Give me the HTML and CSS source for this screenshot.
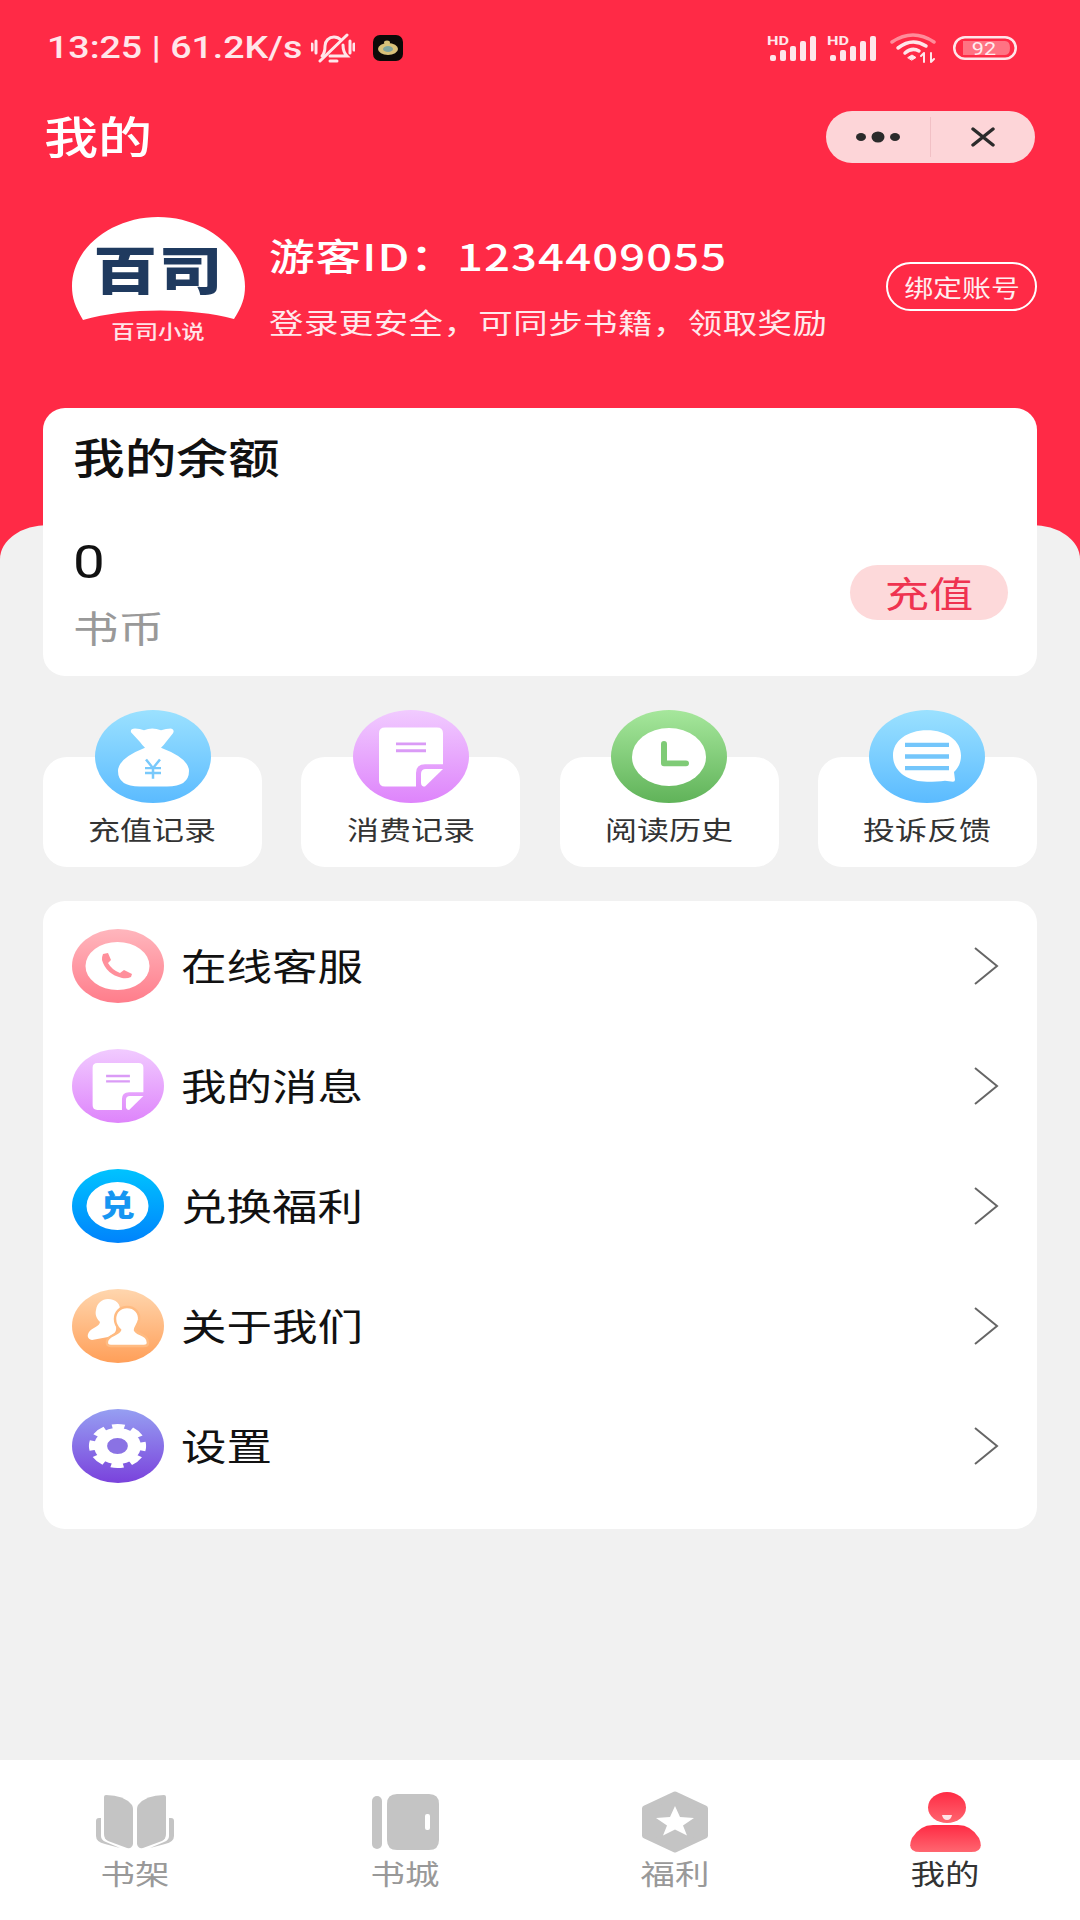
FILE: index.html
```html
<!DOCTYPE html>
<html lang="zh-CN">
<head>
<meta charset="utf-8">
<title>我的</title>
<link rel="stylesheet" href="styles.css">
</head>
<body>
<div class="screen">
  <div class="status">
    <span class="sx status-text">13:25 | 61.2K/s</span>
    <svg class="bell" width="44" height="30" viewBox="0 0 44 30" fill="none" stroke="#ffe6ea" stroke-width="3" stroke-linecap="round">
      <path d="M1 11v6M5 8v12M39 8v12M43 11v6"/>
      <path d="M11 23c3-3 3-6 3-10 0-5 4-9 9-9 3 0 5 1 7 3M32 12c0 5 1 8 4 11H19"/>
      <path d="M9 28L36 2"/>
      <path d="M19 28h7"/>
    </svg>
    <svg class="appicon" width="30" height="26" viewBox="0 0 30 26">
      <rect width="30" height="26" rx="7" fill="#0c0a08"/>
      <ellipse cx="15" cy="14" rx="10" ry="6" fill="#d8c27a"/>
      <ellipse cx="15" cy="14" rx="5" ry="3" fill="#7fa6a0"/>
      <ellipse cx="14" cy="7.500" rx="3" ry="2" fill="#d8c27a"/>
    </svg>
    <span class="status-gap"></span>
    <svg class="signal" width="50" height="36" viewBox="0 0 50 36">
      <text class="hd" transform="translate(0 14.500) scale(1.250 1)">HD</text>
      <rect x="3" y="25" width="6" height="6" rx="2" fill="#ffe6ea"/>
      <rect x="13" y="20" width="6" height="11" rx="2" fill="#ffe6ea"/>
      <rect x="23" y="16" width="6" height="15" rx="2" fill="#ffe6ea"/>
      <rect x="33" y="11" width="6" height="20" rx="2" fill="#ffe6ea"/>
      <rect x="43" y="6" width="6" height="25" rx="2" fill="#ffe6ea"/>
    </svg>
    <svg class="signal second" width="50" height="36" viewBox="0 0 50 36">
      <text class="hd" transform="translate(0 14.500) scale(1.250 1)">HD</text>
      <rect x="3" y="25" width="6" height="6" rx="2" fill="#ffe6ea"/>
      <rect x="13" y="20" width="6" height="11" rx="2" fill="#ffe6ea"/>
      <rect x="23" y="16" width="6" height="15" rx="2" fill="#ffe6ea"/>
      <rect x="33" y="11" width="6" height="20" rx="2" fill="#ffe6ea"/>
      <rect x="43" y="6" width="6" height="25" rx="2" fill="#ffe6ea"/>
    </svg>
    <svg class="wifi" width="46" height="30" viewBox="0 0 46 30" fill="none" stroke-linecap="round">
      <path d="M2 9Q23 -5 44 9" stroke="#ff8c9a" stroke-width="3.500"/>
      <path d="M8 15Q22 4 36 13" stroke="#ffe6ea" stroke-width="3.500"/>
      <path d="M15 20Q22 14 29 18" stroke="#ffe6ea" stroke-width="3.500"/>
      <path d="M18 24.500L22 22L26 24.500L22 27Z" fill="#ffe6ea" stroke="#ffe6ea" stroke-width="1"/>
      <path d="M34 29V20M34 20l-3 3M41 20v9M41 29l3-3" stroke="#ffe6ea" stroke-width="2"/>
    </svg>
    <svg class="battery" width="64" height="24" viewBox="0 0 64 24">
      <rect x="1.250" y="1.250" width="61.500" height="21.500" rx="10.700" fill="none" stroke="#ffe6ea" stroke-width="2.500"/>
      <path d="M10 5H52Q57 5 57 12Q57 19 52 19H10Z" fill="#ff7383"/>
      <text class="batt-num" transform="translate(31 18.500) scale(1.200 1)">92</text>
    </svg>
  </div>

  <div class="titlebar">
    <h1 class="sx page-title">我的</h1>
    <div class="capsule">
      <div class="cap-seg">
        <svg width="50" height="16" viewBox="0 0 50 16" fill="#2b2b2b"><ellipse cx="8" cy="8" rx="5" ry="4"/><ellipse cx="25" cy="8" rx="6.500" ry="5.500"/><ellipse cx="42" cy="8" rx="5" ry="4"/></svg>
      </div>
      <span class="cap-divider"></span>
      <div class="cap-seg">
        <svg width="24" height="20" viewBox="0 0 24 20" fill="none" stroke="#2b2b2b" stroke-width="3.400" stroke-linecap="round"><path d="M2 2L22 18M22 2L2 18"/></svg>
      </div>
    </div>
  </div>

  <div class="profile">
    <div class="avatar">
      <svg class="dome" width="173" height="104" viewBox="0 0 173 108" preserveAspectRatio="none"><path d="M11 107C3 93 0 84 0 72C0 32 40 0 86 0C132 0 173 32 173 72C173 84 170 93 162 106C120 94 54 94 11 107Z" fill="#fff"/></svg>
      <span class="sc logo-mark">百司</span>
      <span class="sc logo-name">百司小说</span>
    </div>
    <div class="info">
      <div class="sx name">游客ID：1234409055</div>
      <div class="sx hint">登录更安全，可同步书籍，领取奖励</div>
    </div>
    <div class="bind"><span class="sc bind-text">绑定账号</span></div>
  </div>

  <div class="sheet">
    <section class="balance">
      <h2 class="sx balance-title">我的余额</h2>
      <div class="balance-row">
        <div class="balance-col">
          <div class="sx amount">0</div>
          <div class="sx unit">书币</div>
        </div>
        <div class="recharge"><span class="sc recharge-text">充值</span></div>
      </div>
    </section>

    <div class="quick">
      <div class="qcard">
        <svg class="qicon" width="116" height="93" viewBox="0 0 116 96" preserveAspectRatio="none">
          <defs><linearGradient id="qg1" x1="0" y1="0" x2="0" y2="1"><stop offset="0" stop-color="#9be1ff"/><stop offset="1" stop-color="#5bbbff"/></linearGradient></defs>
          <ellipse cx="58" cy="48" rx="58" ry="48" fill="url(#qg1)"/>
          <path d="M36 23Q35 19 40 19Q45 19 49 21Q57 17 66 21Q71 19 76 19Q80 20 78 24L71 33Q69 36 66 39Q94 50 94 63Q94 79 72 79H45Q23 79 23 63Q23 50 50 39Q47 36 45 33Z" fill="#fff"/>
          <path d="M51 51L58 60L65 51M58 60V71M50 60H66M50 65H66" stroke="#79c9fb" stroke-width="2.500" fill="none"/>
        </svg>
        <span class="sc qlabel">充值记录</span>
      </div>
      <div class="qcard">
        <svg class="qicon" width="116" height="93" viewBox="0 0 116 96" preserveAspectRatio="none">
          <defs><linearGradient id="qg2" x1="0" y1="0" x2="0" y2="1"><stop offset="0" stop-color="#f1cbff"/><stop offset="1" stop-color="#de84fb"/></linearGradient></defs>
          <ellipse cx="58" cy="48" rx="58" ry="48" fill="url(#qg2)"/>
          <path d="M32 18H84Q90 18 90 24V56H72Q63 56 63 65V79H32Q26 79 26 73V24Q26 18 32 18Z" fill="#fff"/>
          <path d="M68 66Q68 61 73 61H90L72 79Q68 79 68 75Z" fill="#fff"/>
          <path d="M43 35H73M43 42H73" stroke="#da9bf6" stroke-width="3"/>
        </svg>
        <span class="sc qlabel">消费记录</span>
      </div>
      <div class="qcard">
        <svg class="qicon" width="116" height="93" viewBox="0 0 116 96" preserveAspectRatio="none">
          <defs><linearGradient id="qg3" x1="0" y1="0" x2="0" y2="1"><stop offset="0" stop-color="#a6e79c"/><stop offset="1" stop-color="#60b359"/></linearGradient></defs>
          <ellipse cx="58" cy="48" rx="58" ry="48" fill="url(#qg3)"/>
          <ellipse cx="58" cy="48.500" rx="37" ry="30" fill="#fff"/>
          <path d="M53 35V55H75" stroke="#7fcb76" stroke-width="6" stroke-linecap="round" stroke-linejoin="round" fill="none"/>
        </svg>
        <span class="sc qlabel">阅读历史</span>
      </div>
      <div class="qcard">
        <svg class="qicon" width="116" height="93" viewBox="0 0 116 96" preserveAspectRatio="none">
          <defs><linearGradient id="qg4" x1="0" y1="0" x2="0" y2="1"><stop offset="0" stop-color="#9be1ff"/><stop offset="1" stop-color="#5bbbff"/></linearGradient></defs>
          <ellipse cx="58" cy="48" rx="58" ry="48" fill="url(#qg4)"/>
          <path d="M58 21C78 21 92 32 92 47C92 55 89 60 85 64L86 72Q86 74 84 74L76 73C71 74 65 74 58 74C38 74 24 63 24 47C24 32 38 21 58 21Z" fill="#fff"/>
          <path d="M36 36H80M36 48H80M36 60H80" stroke="#74c6fb" stroke-width="4.500"/>
        </svg>
        <span class="sc qlabel">投诉反馈</span>
      </div>
    </div>

    <section class="menu">
      <div class="row">
        <svg class="ricon" width="92" height="74" viewBox="0 0 92 74">
          <defs><linearGradient id="rg1" x1="0" y1="0" x2="0" y2="1"><stop offset="0" stop-color="#ffb6bd"/><stop offset="1" stop-color="#ff7d8b"/></linearGradient></defs>
          <ellipse cx="46" cy="37" rx="46" ry="37" fill="url(#rg1)"/>
          <ellipse cx="45.500" cy="37" rx="32" ry="24" fill="#fff"/>
          <path d="M31 25L36 24L39 31L36 34Q40 41 48 44L52 41L60 45L59 48Q55 50 50 49Q34 45 30 31Q30 27 31 25Z" fill="#ff8f9b"/>
        </svg>
        <span class="sx rlabel">在线客服</span>
        <svg class="chev" width="26" height="40" viewBox="0 0 26 40" fill="none" stroke="#666" stroke-width="2"><path d="M2 2L24 20L2 38"/></svg>
      </div>
      <div class="row">
        <svg class="ricon" width="92" height="74" viewBox="0 0 116 96" preserveAspectRatio="none">
          <defs><linearGradient id="rg2" x1="0" y1="0" x2="0" y2="1"><stop offset="0" stop-color="#f1cbff"/><stop offset="1" stop-color="#de84fb"/></linearGradient></defs>
          <ellipse cx="58" cy="48" rx="58" ry="48" fill="url(#rg2)"/>
          <path d="M32 18H84Q90 18 90 24V56H72Q63 56 63 65V79H32Q26 79 26 73V24Q26 18 32 18Z" fill="#fff"/>
          <path d="M68 66Q68 61 73 61H90L72 79Q68 79 68 75Z" fill="#fff"/>
          <path d="M43 35H73M43 42H73" stroke="#da9bf6" stroke-width="3"/>
        </svg>
        <span class="sx rlabel">我的消息</span>
        <svg class="chev" width="26" height="40" viewBox="0 0 26 40" fill="none" stroke="#666" stroke-width="2"><path d="M2 2L24 20L2 38"/></svg>
      </div>
      <div class="row">
        <svg class="ricon" width="92" height="74" viewBox="0 0 92 74">
          <defs><linearGradient id="rg3" x1="0" y1="0" x2="0" y2="1"><stop offset="0" stop-color="#00c3ff"/><stop offset="1" stop-color="#0083fc"/></linearGradient></defs>
          <ellipse cx="46" cy="37" rx="46" ry="37" fill="url(#rg3)"/>
          <ellipse cx="45.500" cy="37" rx="31" ry="24" fill="#fff"/>
          <text class="dui" transform="translate(45.500 47) scale(1.150 1)">兑</text>
        </svg>
        <span class="sx rlabel">兑换福利</span>
        <svg class="chev" width="26" height="40" viewBox="0 0 26 40" fill="none" stroke="#666" stroke-width="2"><path d="M2 2L24 20L2 38"/></svg>
      </div>
      <div class="row">
        <svg class="ricon" width="92" height="74" viewBox="0 0 92 74">
          <defs><linearGradient id="rg4" x1="0" y1="0" x2="0" y2="1"><stop offset="0" stop-color="#ffd6ae"/><stop offset="1" stop-color="#ff9f59"/></linearGradient></defs>
          <ellipse cx="46" cy="37" rx="46" ry="37" fill="url(#rg4)"/>
          <path d="M36 10C44 10 49 15 48 23C47 29 44 32 44 36C44 40 46 44 36 48L20 51C15 50 15 46 17 43C21 38 27 38 28 33C24 29 23 25 24 21C25 14 30 10 36 10Z" fill="#fff"/>
          <path d="M55 18C63 18 68 24 67 31C66 36 63 38 63 41C65 46 76 45 76 54Q76 57 72 57H39Q34 57 35 52C36 46 46 46 48 41C45 38 43 35 43 30C43 23 48 18 55 18Z" fill="#fff" stroke="#ffbb82" stroke-width="2.500"/>
        </svg>
        <span class="sx rlabel">关于我们</span>
        <svg class="chev" width="26" height="40" viewBox="0 0 26 40" fill="none" stroke="#666" stroke-width="2"><path d="M2 2L24 20L2 38"/></svg>
      </div>
      <div class="row">
        <svg class="ricon" width="92" height="74" viewBox="0 0 92 74">
          <defs><linearGradient id="rg5" x1="0" y1="0" x2="0" y2="1"><stop offset="0" stop-color="#969ff2"/><stop offset="1" stop-color="#7a42dc"/></linearGradient></defs>
          <ellipse cx="46" cy="37" rx="46" ry="37" fill="url(#rg5)"/>
          <g transform="translate(45.500 37) scale(1.300 1)">
            <circle r="18" fill="#fff"/>
            <circle r="19.500" fill="none" stroke="#fff" stroke-width="5" stroke-dasharray="9.500 5.820" stroke-dashoffset="4.750"/>
            <circle r="8" fill="#8a72e4"/>
          </g>
        </svg>
        <span class="sx rlabel">设置</span>
        <svg class="chev" width="26" height="40" viewBox="0 0 26 40" fill="none" stroke="#666" stroke-width="2"><path d="M2 2L24 20L2 38"/></svg>
      </div>
    </section>
  </div>

  <nav class="tabbar">
    <div class="tab">
      <svg class="ticon" width="78" height="56" viewBox="0 0 78 56" fill="#c4c4c4">
        <path d="M10 1Q28 1 36 11Q37 13 37 15V50Q36 55 31 54L12 47Q8 45 8 40V3Q8 1 10 1Z"/>
        <path d="M68 1Q50 1 42 11Q41 13 41 15V50Q42 55 47 54L66 47Q70 45 70 40V3Q70 1 68 1Z"/>
        <path d="M0 27Q0 24 3 24H5V42Q5 46 10 48L24 54L9 50Q0 48 0 42Z"/>
        <path d="M78 27Q78 24 75 24H73V42Q73 46 68 48L54 54L69 50Q78 48 78 42Z"/>
      </svg>
      <span class="sc tlabel">书架</span>
    </div>
    <div class="tab">
      <svg class="ticon" width="67" height="56" viewBox="0 0 67 56" fill="#c4c4c4">
        <rect x="0" y="2" width="10" height="53" rx="5"/>
        <path d="M25 0H57Q67 0 67 10V46Q67 56 57 56H25Q15 56 15 46V10Q15 0 25 0ZM55 20Q53 20 53 22V34Q53 36 55 36H56Q58 36 58 34V22Q58 20 56 20Z" fill-rule="evenodd"/>
      </svg>
      <span class="sc tlabel">书城</span>
    </div>
    <div class="tab">
      <svg class="ticon" width="66" height="61" viewBox="0 0 66 61">
        <path d="M33 3L63 17V44L33 58L3 44V17Z" fill="#c4c4c4" stroke="#c4c4c4" stroke-width="6" stroke-linejoin="round"/>
        <path d="M33 14.500L38 25.500L52 26.500L41 34L45 44L33 38L21 44L25 34L14 26.500L28 25.500Z" fill="#fff"/>
      </svg>
      <span class="sc tlabel">福利</span>
    </div>
    <div class="tab tab-on">
      <svg class="ticon" width="73" height="60" viewBox="0 0 73 60">
        <defs><linearGradient id="tg" x1="0" y1="0" x2="0" y2="1"><stop offset="0" stop-color="#ff2b44"/><stop offset="1" stop-color="#ff6670"/></linearGradient></defs>
        <ellipse cx="38" cy="15.500" rx="19" ry="15.500" fill="url(#tg)"/>
        <path d="M33 23H43Q42 28 38 28Q34 28 33 23Z" fill="#ffe3e6"/>
        <path d="M24 33H49Q62 33 70 46Q76 60 62 60H11Q-3 60 3 46Q11 33 24 33Z" fill="url(#tg)"/>
      </svg>
      <span class="sc tlabel">我的</span>
    </div>
  </nav>
</div>
</body>
</html>
```

FILE: styles.css
```css
* { box-sizing: border-box; }
html, body { margin: 0; padding: 0; }
body { width: 1080px; height: 1920px; overflow: hidden; font-family: "Noto Sans CJK SC", "Noto Sans", sans-serif; }

/* The reference is stretched horizontally: text is widened to match */
.sx, .sc { display: inline-block; white-space: nowrap; }
.sx { transform: scaleX(1.23); transform-origin: left center; }
.sc { transform: scaleX(1.23); transform-origin: center center; }

.screen { width: 1080px; height: 1920px; display: flex; flex-direction: column; background: #ff2a46; }

.status { height: 96px; flex: none; display: flex; align-items: center; padding: 0 63px 0 47px; }
.status-text { width: 264px; font-family: "Roboto", sans-serif; font-size: 30.500px; line-height: 40px; font-weight: 500; color: #ffe6ea; }
.bell { margin-right: 18px; }
.status-gap { flex: 1; }
.signal + .signal { margin-left: 10px; }
.hd { font-family: "Roboto", sans-serif; font-size: 13px; font-weight: 700; fill: #ffe6ea; }
.wifi { margin-left: 13px; }
.battery { margin-left: 17px; }
.batt-num { font-family: "Roboto", sans-serif; font-size: 18px; fill: #ffecef; text-anchor: middle; }

.titlebar { height: 82px; flex: none; display: flex; align-items: center; justify-content: space-between; padding: 0 45px 0 44px; }
.page-title { margin: 0 0 4px; font-size: 44px; line-height: 56px; font-weight: 500; color: #fff; }
.capsule { width: 209px; height: 52px; border-radius: 26px; background: #fdd5d8; display: flex; align-items: center; }
.cap-seg { flex: 1; display: flex; align-items: center; justify-content: center; }
.cap-divider { width: 1px; height: 40px; background: #f2c0c5; }

.profile { height: 347px; flex: none; display: flex; align-items: flex-start; padding: 39px 43px 0 72px; }
.avatar { position: relative; width: 173px; flex: none; display: flex; flex-direction: column; align-items: center; margin-right: 24px; }
.dome { display: block; }
.logo-mark { position: absolute; top: 16px; left: 0; width: 173px; text-align: center; font-size: 52px; line-height: 70px; font-weight: 900; color: #1f3a5f; letter-spacing: 1px; }
.logo-name { font-size: 19px; line-height: 24px; font-weight: 500; color: #ffe3e8; margin-top: -2px; }
.info { flex: 1; padding-top: 11px; }
.name { font-size: 37px; line-height: 54px; font-weight: 500; color: #fff; letter-spacing: 0.900px; }
.hint { font-size: 28px; line-height: 40px; color: #ffe9ec; margin-top: 20px; letter-spacing: 0.370px; }
.bind { width: 151px; height: 49px; border: 2.500px solid #fff; border-radius: 25px; margin-top: 45px; display: flex; align-items: center; justify-content: center; flex: none; }
.bind-text { font-size: 23.500px; line-height: 30px; color: #ffeef0; }

.sheet { flex: 1; background: #f1f1f1; border-radius: 48px 48px 0 0 / 34px 34px 0 0; padding: 0 43px; }
.balance { height: 268px; margin-top: -117px; background: #fff; border-radius: 22px; padding: 19px 29px 0 30px; }
.balance-title { margin: 0; font-size: 42px; line-height: 58px; font-weight: 500; color: #111; }
.balance-row { display: flex; align-items: center; justify-content: space-between; margin-top: 47px; }
.balance-col { display: flex; flex-direction: column; align-items: flex-start; }
.amount { font-family: "Roboto", sans-serif; font-size: 46px; line-height: 60px; color: #111; }
.unit { font-size: 37px; line-height: 50px; color: #999; margin-top: 10px; }
.recharge { width: 158px; height: 55px; border-radius: 28px; background: #fdd9da; display: flex; align-items: center; justify-content: center; margin-top: 0; }
.recharge-text { font-size: 36px; line-height: 50px; color: #ef3350; }

.quick { display: grid; grid-template-columns: repeat(4, 219px); justify-content: space-between; margin-top: 81px; }
.qcard { height: 110px; background: #fff; border-radius: 24px; display: flex; flex-direction: column; align-items: center; }
.qicon { margin-top: -47px; flex: none; display: block; }
.qlabel { font-size: 26px; line-height: 52px; color: #333; }

.menu { margin-top: 34px; height: 628px; background: #fff; border-radius: 22px; padding: 5px 0 0; }
.row { height: 120px; display: flex; align-items: center; padding: 0 38px 0 29px; }
.ricon { flex: none; margin-right: 17px; }
.rlabel { font-size: 37px; line-height: 50px; color: #111; margin-bottom: 3px; }
.chev { margin-left: auto; flex: none; }
.dui { font-size: 30px; font-weight: 900; fill: #1696f2; text-anchor: middle; }

.tabbar { height: 160px; flex: none; background: #fff; display: grid; grid-template-columns: repeat(4, 270px); }
.tab { position: relative; display: flex; flex-direction: column; align-items: center; padding-top: 31px; }
.ticon { display: block; height: 62px; flex: none; }
.tlabel { font-size: 28px; line-height: 40px; color: #999; margin-top: 0; }
.tab-on .tlabel { color: #333; }
```
